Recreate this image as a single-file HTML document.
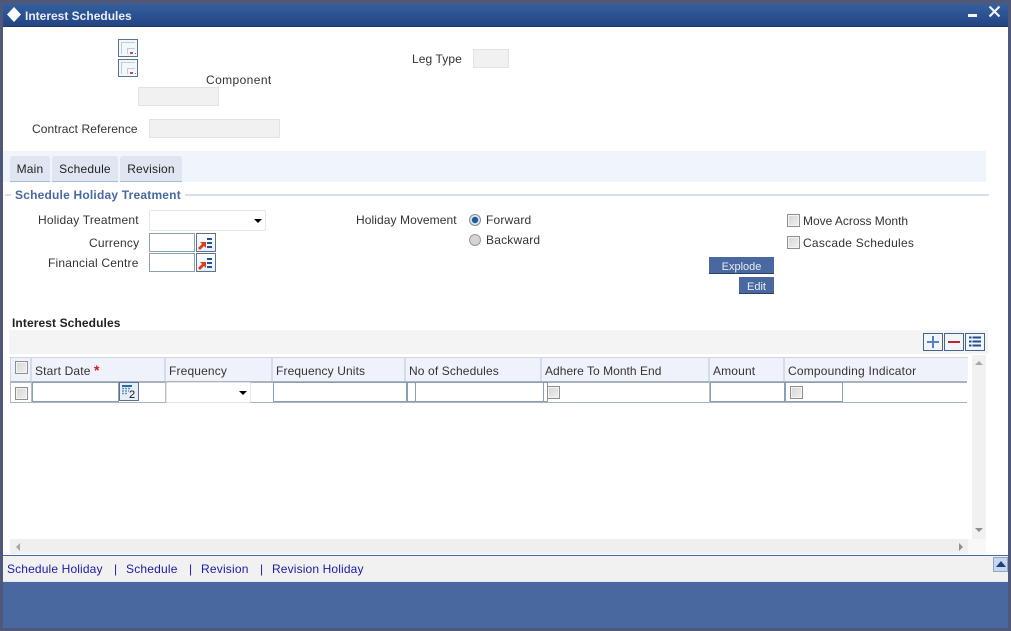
<!DOCTYPE html>
<html><head><meta charset="utf-8"><style>
html,body{margin:0;padding:0}
body{width:1011px;height:631px;position:relative;overflow:hidden;background:#fff;font-family:"Liberation Sans",sans-serif;font-size:12px;color:#333}
div,span.a,svg{position:absolute}
.t{white-space:nowrap;line-height:14px;letter-spacing:.2px}
.ro{background:#f1f1f1;border:1px solid #e2e2e2;box-sizing:border-box}
.in{background:#fff;border:1px solid #8aa0b2;box-sizing:border-box}
.sel{background:#fff;border:1px solid #e6e6e6;border-radius:2px;box-sizing:border-box}
.arr{width:0;height:0;border-left:4px solid transparent;border-right:4px solid transparent;border-top:4px solid #000}
.cb{width:13px;height:13px;box-sizing:border-box;border:1px solid #8f8f8f;background:linear-gradient(135deg,#d5d5d5,#f0f0f0);box-shadow:inset 0 0 0 1px #f4f4f4}
.tab{top:156px;height:26px;background:#dfe6f2;border-radius:3px 3px 0 0;border-bottom:1px solid #a9bdd8;box-sizing:border-box;text-align:center;line-height:27px;letter-spacing:.2px;color:#222}
.btn{background:#48689f;border-bottom:1px solid #2b3f66;box-sizing:border-box;color:#e8edf5;font-size:11px;text-align:center;line-height:20px}
.th{top:357px;height:24px;background:#eff2fb;border-top:1px solid #ccd6e4;border-right:2px solid #d3dcea;box-sizing:border-box;line-height:26px;padding-left:3px;white-space:nowrap;letter-spacing:.15px;color:#333}
.lk{top:562px;line-height:15px;color:#1a1aa6;white-space:nowrap;letter-spacing:.2px}
</style></head><body>

<div style="left:0;top:0;width:1011px;height:4px;background:#4f5878"></div>
<div style="left:0;top:0;width:3px;height:631px;background:#4f5878"></div>
<div style="left:1008px;top:0;width:3px;height:631px;background:#4f5878"></div>
<div style="left:0;top:628px;width:1011px;height:3px;background:#4f5878"></div>

<div style="left:3px;top:4px;width:1005px;height:23px;background:linear-gradient(#33609f,#2a4f8f 60%,#234482);border-bottom:1px solid #1b3566;box-sizing:border-box"></div>
<svg style="left:6px;top:6px" width="16" height="18" viewBox="0 0 16 18"><path d="M8 1L15 8.500L8 16L1 8.500Z" fill="#fff"/></svg>
<div class="t" style="left:25px;top:9px;color:#e9eef6;font-weight:bold;letter-spacing:0">Interest Schedules</div>
<div style="left:968px;top:14px;width:9px;height:3px;background:#f4f4f4"></div>
<svg style="left:988px;top:5px" width="13" height="13" viewBox="0 0 13 13"><path d="M1.500 1.500L11.500 11.500M11.500 1.500L1.500 11.500" stroke="#f4f4f4" stroke-width="2.200"/></svg>

<svg style="left:118px;top:39px" width="20" height="18" viewBox="0 0 20 18"><rect x=".5" y=".5" width="19" height="17" fill="#f3f6fa" stroke="#5a7390"/><path d="M3 3.500H17M3.500 3V15M9 9.500H17M9.500 9V15" stroke="#c2ccd6" fill="none"/><rect x="12" y="13" width="3" height="2" fill="#a85a50"/><rect x="17" y="14" width="1" height="1" fill="#a85a50"/></svg>
<svg style="left:118px;top:59px" width="20" height="18" viewBox="0 0 20 18"><rect x=".5" y=".5" width="19" height="17" fill="#f3f6fa" stroke="#5a7390"/><path d="M3 3.500H17M3.500 3V15M9 9.500H17M9.500 9V15" stroke="#c2ccd6" fill="none"/><rect x="12" y="13" width="3" height="2" fill="#a85a50"/><rect x="17" y="14" width="1" height="1" fill="#a85a50"/></svg>

<div class="t" style="left:206px;top:73px;letter-spacing:.4px">Component</div>
<div class="ro" style="left:138px;top:87px;width:81px;height:19px"></div>
<div class="t" style="left:412px;top:52px;letter-spacing:.1px">Leg Type</div>
<div class="ro" style="left:473px;top:49px;width:36px;height:19px"></div>
<div class="t" style="left:32px;top:122px;letter-spacing:.09px">Contract Reference</div>
<div class="ro" style="left:149px;top:119px;width:131px;height:19px"></div>

<div style="left:3px;top:151px;width:983px;height:31px;background:#f0f4fb"></div>
<div class="tab" style="left:10px;width:40px">Main</div>
<div class="tab" style="left:52px;width:66px">Schedule</div>
<div class="tab" style="left:120px;width:62px">Revision</div>

<div style="left:5px;top:194px;width:984px;height:2px;background:#d5e0ec"></div>
<div class="t" style="left:11px;top:188px;padding:0 4px;background:#fff;color:#48689f;font-weight:bold;letter-spacing:.2px">Schedule Holiday Treatment</div>

<div class="t" style="left:38px;top:213px">Holiday Treatment</div>
<div class="sel" style="left:149px;top:210px;width:117px;height:21px"></div>
<div class="arr" style="left:254px;top:219px"></div>
<div class="t" style="left:89px;top:236px">Currency</div>
<div class="in" style="left:149px;top:233px;width:46px;height:19px"></div>
<div class="t" style="left:48px;top:256px">Financial Centre</div>
<div class="in" style="left:149px;top:253px;width:46px;height:19px"></div>
<svg style="left:196px;top:233px" width="20" height="19" viewBox="0 0 20 19"><defs><linearGradient id="g" x1="0" y1="0" x2="0" y2="1"><stop offset="0" stop-color="#ffffff"/><stop offset="1" stop-color="#e6edf5"/></linearGradient></defs><rect x=".5" y=".5" width="19" height="18" fill="url(#g)" stroke="#5a7390"/><path d="M2 15L6 11L4 9H10V15L8 13L4 17Z" fill="#d8401c"/><path d="M11 6H16M11 10H16M11 14H16" stroke="#24528f" stroke-width="2"/></svg>
<svg style="left:196px;top:253px" width="20" height="19" viewBox="0 0 20 19"><rect x=".5" y=".5" width="19" height="18" fill="url(#g)" stroke="#5a7390"/><path d="M2 15L6 11L4 9H10V15L8 13L4 17Z" fill="#d8401c"/><path d="M11 6H16M11 10H16M11 14H16" stroke="#24528f" stroke-width="2"/></svg>

<div class="t" style="left:356px;top:213px;letter-spacing:.08px">Holiday Movement</div>
<svg style="left:468px;top:213px" width="14" height="14" viewBox="0 0 14 14"><circle cx="7" cy="7" r="5.500" fill="#dfe6ec" stroke="#7f8c99"/><circle cx="7" cy="7" r="3.200" fill="#1f5c9c"/></svg>
<div class="t" style="left:486px;top:213px">Forward</div>
<svg style="left:468px;top:233px" width="14" height="14" viewBox="0 0 14 14"><circle cx="7" cy="7" r="5.500" fill="#d4d4d4" stroke="#9a9a9a"/></svg>
<div class="t" style="left:486px;top:233px">Backward</div>

<div class="cb" style="left:787px;top:214px"></div>
<div class="t" style="left:803px;top:214px;letter-spacing:-.02px">Move Across Month</div>
<div class="cb" style="left:787px;top:236px"></div>
<div class="t" style="left:803px;top:236px;letter-spacing:.26px">Cascade Schedules</div>

<div class="btn" style="left:709px;top:257px;width:65px;height:17px">Explode</div>
<div class="btn" style="left:739px;top:277px;width:35px;height:17px">Edit</div>

<div class="t" style="left:12px;top:316px;font-weight:bold;color:#222;letter-spacing:.1px">Interest Schedules</div>
<div style="left:9px;top:330px;width:979px;height:24px;background:#f4f4f4"></div>
<svg style="left:923px;top:333px" width="20" height="18" viewBox="0 0 20 18"><rect x=".5" y=".5" width="19" height="17" fill="#f2f5fa" stroke="#47658a"/><path d="M4 9H16M10 3V15" stroke="#4f82c8" stroke-width="2"/></svg>
<svg style="left:944px;top:333px" width="20" height="18" viewBox="0 0 20 18"><rect x=".5" y=".5" width="19" height="17" fill="#f2f5fa" stroke="#47658a"/><path d="M4 9H16" stroke="#c4232b" stroke-width="2"/></svg>
<svg style="left:965px;top:333px" width="20" height="18" viewBox="0 0 20 18"><rect x=".5" y=".5" width="19" height="17" fill="#f2f5fa" stroke="#47658a"/><path d="M4 4.500H16M4 8.500H16M4 12.500H16" stroke="#1d4f93" stroke-width="2"/><path d="M7 3V14" stroke="#f2f5fa"/></svg>

<div class="th" style="left:10px;width:22px;border-left:1px solid #ccd6e4"></div>
<div class="th" style="left:32px;width:134px">Start Date <span style="color:#d01c1c;font-weight:bold;font-size:14px;line-height:10px">*</span></div>
<div class="th" style="left:166px;width:107px">Frequency</div>
<div class="th" style="left:273px;width:133px;letter-spacing:.12px">Frequency Units</div>
<div class="th" style="left:406px;width:136px;letter-spacing:.12px">No of Schedules</div>
<div class="th" style="left:542px;width:168px;letter-spacing:.03px">Adhere To Month End</div>
<div class="th" style="left:710px;width:75px">Amount</div>
<div class="th" style="left:785px;width:183px;border-right:0;letter-spacing:.2px">Compounding Indicator</div>
<div class="cb" style="left:15px;top:361px"></div>

<div style="left:10px;top:381px;width:957px;height:2px;background:#a9b3bd"></div>
<div style="left:10px;top:402px;width:957px;height:1px;background:#a9b3bd"></div>
<div style="left:10px;top:381px;width:1px;height:22px;background:#b5bec8"></div>
<div style="left:31px;top:381px;width:1px;height:22px;background:#b5bec8"></div>
<div style="left:165px;top:381px;width:1px;height:22px;background:#b5bec8"></div>
<div style="left:709px;top:381px;width:1px;height:22px;background:#b5bec8"></div>
<div class="cb" style="left:15px;top:387px"></div>
<div class="in" style="left:32px;top:382px;width:87px;height:20px"></div>
<svg style="left:119px;top:382px" width="20" height="19" viewBox="0 0 20 19"><rect x=".5" y=".5" width="19" height="18" fill="#e6eef7" stroke="#5a7390"/><rect x="3" y="3" width="10" height="2" fill="#2d6aa8"/><path d="M3 6.500H12M3 9H10M3 11.500H8" stroke="#6a93b8" stroke-width="1.500" stroke-dasharray="2 1"/><text x="10" y="16" font-family="Liberation Sans" font-size="11" fill="#111">2</text></svg>
<div class="sel" style="left:166px;top:382px;width:85px;height:21px"></div>
<div class="arr" style="left:239px;top:391px"></div>
<div class="in" style="left:273px;top:382px;width:134px;height:20px"></div>
<div class="in" style="left:407px;top:382px;width:9px;height:20px"></div>
<div class="in" style="left:415px;top:382px;width:129px;height:20px"></div>
<div class="in" style="left:544px;top:382px;width:4px;height:20px;border-left:0"></div>
<div class="cb" style="left:547px;top:386px"></div>
<div class="in" style="left:710px;top:382px;width:75px;height:20px"></div>
<div class="in" style="left:785px;top:382px;width:58px;height:20px"></div>
<div class="cb" style="left:790px;top:386px"></div>

<div style="left:972px;top:355px;width:14px;height:184px;background:#f1f1f1"></div>
<div style="left:975px;top:361px;width:0;height:0;border-left:4px solid transparent;border-right:4px solid transparent;border-bottom:4px solid #a8a8a8"></div>
<div class="arr" style="left:975px;top:528px;border-top-color:#8f8f8f"></div>
<div style="left:10px;top:539px;width:958px;height:15px;background:#efefef"></div>
<div style="left:968px;top:539px;width:18px;height:15px;background:#f8f8f8"></div>
<div style="left:16px;top:543px;width:0;height:0;border-top:4px solid transparent;border-bottom:4px solid transparent;border-right:4px solid #a8a8a8"></div>
<div style="left:959px;top:543px;width:0;height:0;border-top:4px solid transparent;border-bottom:4px solid transparent;border-left:4px solid #8f8f8f"></div>

<div style="left:3px;top:555px;width:1005px;height:1px;background:#48689f"></div>
<div style="left:3px;top:556px;width:1005px;height:26px;background:#f1f1f1"></div>
<div class="lk" style="left:7px;letter-spacing:.14px">Schedule Holiday</div>
<div class="lk" style="left:114px">|</div>
<div class="lk" style="left:126px">Schedule</div>
<div class="lk" style="left:189px">|</div>
<div class="lk" style="left:201px">Revision</div>
<div class="lk" style="left:260px">|</div>
<div class="lk" style="left:272px;letter-spacing:.14px">Revision Holiday</div>
<div style="left:993px;top:557px;width:15px;height:15px;background:#c5d6ee;border:1px solid #8ea6c6;box-sizing:border-box"></div>
<div style="left:996px;top:561px;width:0;height:0;border-left:5px solid transparent;border-right:5px solid transparent;border-bottom:6px solid #1f3f7f"></div>

<div style="left:3px;top:581px;width:1005px;height:47px;background:#48689f;border-top:1px solid #dfe6f2;box-sizing:border-box"></div>
</body></html>
